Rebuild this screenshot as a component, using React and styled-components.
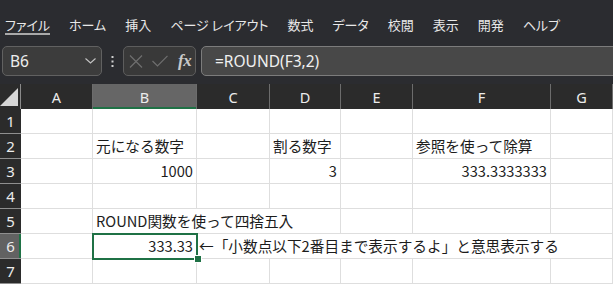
import React from 'react';
import styled, { createGlobalStyle, css } from 'styled-components';

const GlobalStyle = createGlobalStyle`
  html, body {
    margin: 0;
    padding: 0;
    background: #2b2c30;
    overflow: hidden;
  }
`;

const JP = `"Noto Sans CJK JP", "Noto Sans", sans-serif`;
const GREEN = '#1f7145';
const GRID = '#dedede';

const Window = styled.div`
  width: 613px;
  height: 284px;
  display: flex;
  flex-direction: column;
  background: #2b2c30;
  overflow: hidden;
`;

const MenuBar = styled.div`
  height: 47px;
  display: flex;
  align-items: flex-start;
  gap: 19px;
  padding-left: 5px;
  box-sizing: border-box;
`;

const MenuItem = styled.div`
  margin-top: 17px;
  height: 16px;
  line-height: 16px;
  font-family: ${JP};
  font-size: 13px;
  font-feature-settings: "palt";
  color: #e8e8e8;
  white-space: nowrap;
  ${(p) => p.$active && css`
    border-bottom: 2px solid #a9a9a9;
  `}
`;

const FormulaRow = styled.div`
  height: 30px;
  display: flex;
  align-items: stretch;
  padding-left: 2px;
  margin-bottom: 8px;
`;

const NameBox = styled.div`
  width: 100px;
  box-sizing: border-box;
  border: 1px solid #616161;
  border-radius: 5px;
  background: #3c3c3c;
  display: flex;
  align-items: center;
  justify-content: space-between;
  padding: 0 5px 0 7px;
  font-family: "Noto Sans", sans-serif;
  font-size: 15.5px;
  color: #ededed;
`;

const Dots = styled.div`
  width: 21px;
  display: flex;
  align-items: center;
  justify-content: center;
`;

const FxBox = styled.div`
  width: 73px;
  box-sizing: border-box;
  border: 1px solid #5d5d5d;
  border-radius: 5px;
  background: #393939;
  display: flex;
  align-items: center;
  padding-left: 5px;
  gap: 9px;
`;

const FxLabel = styled.span`
  font-family: "Liberation Serif", serif;
  font-style: italic;
  font-weight: bold;
  font-size: 17px;
  color: #c9c9c9;
  margin-left: 1px;
  letter-spacing: -0.5px;
`;

const FormulaInput = styled.div`
  flex: 1;
  margin-left: 5px;
  margin-right: -6px;
  box-sizing: border-box;
  border: 1px solid #7c7c7c;
  border-radius: 5px;
  background: #484848;
  display: flex;
  align-items: center;
  padding-left: 13px;
  font-family: "Noto Sans", sans-serif;
  font-size: 15.5px;
  color: #f0f0f0;
`;

const Sheet = styled.div`
  flex: 1;
  display: grid;
  grid-template-columns: 21px 72px 104px 73px 71px 72px 138px 1fr;
  grid-auto-rows: 25px;
  background: #ffffff;
`;

const Corner = styled.div`
  background: #2b2b2b;
  border-right: 1px solid #8a8a8a;
  box-sizing: border-box;
  display: flex;
  align-items: flex-end;
  justify-content: flex-end;
  padding: 0 2px 3px 0;
`;

const ColHead = styled.div`
  background: ${(p) => (p.$selected ? '#666666' : '#2b2b2b')};
  border-right: 1px solid #6c6c6c;
  box-sizing: border-box;
  display: flex;
  align-items: center;
  justify-content: center;
  font-family: "Noto Sans", sans-serif;
  font-size: 14.5px;
  color: #ececec;
  padding-top: 1px;
  ${(p) => p.$selected && css`
    box-shadow: inset 0 -2px 0 ${GREEN};
  `}
`;

const RowHead = styled.div`
  background: ${(p) => (p.$selected ? '#626262' : '#2b2b2b')};
  border-bottom: 1px solid #8f8f8f;
  box-sizing: border-box;
  display: flex;
  align-items: center;
  justify-content: center;
  font-family: "Noto Sans", sans-serif;
  font-size: 15px;
  color: #ececec;
  ${(p) => p.$selected && css`
    box-shadow: inset -2px 0 0 ${GREEN};
  `}
`;

const Cell = styled.div`
  grid-column: span ${(p) => p.$span || 1};
  position: relative;
  box-sizing: border-box;
  border-right: 1px solid ${GRID};
  border-bottom: 1px solid ${GRID};
  display: flex;
  align-items: center;
  justify-content: ${(p) => (p.$right ? 'flex-end' : 'flex-start')};
  padding: 0 ${(p) => (p.$right ? '3px' : '3px')} 0 ${(p) => (p.$tight ? '2px' : '3px')};
  font-family: ${JP};
  font-size: 14.67px;
  line-height: 1;
  color: #1c1c1c;
  white-space: nowrap;
`;

const Selection = styled.div`
  position: absolute;
  top: -1px;
  left: -1px;
  right: -2px;
  bottom: -2px;
  border: 2px solid ${GREEN};
  z-index: 1;
  pointer-events: none;
`;

const FillHandle = styled.div`
  position: absolute;
  right: -5px;
  bottom: -4px;
  width: 6px;
  height: 6px;
  background: ${GREEN};
  border: 1px solid #ffffff;
  box-sizing: content-box;
  margin: -1px;
  z-index: 2;
`;

const menu = ['ファイル', 'ホーム', '挿入', 'ページ レイアウト', '数式', 'データ', '校閲', '表示', '開発', 'ヘルプ'];
const columns = ['A', 'B', 'C', 'D', 'E', 'F', 'G'];

const Chevron = () => (
  <svg width="11" height="6" viewBox="0 0 11 6">
    <path d="M0.5 0.5 L5.5 5 L10.5 0.5" fill="none" stroke="#c4c4c4" strokeWidth="1.1" />
  </svg>
);

const VDots = () => (
  <svg width="3" height="11" viewBox="0 0 3 11">
    <rect x="0.5" y="0" width="2" height="2" fill="#d0d0d0" />
    <rect x="0.5" y="4.5" width="2" height="2" fill="#d0d0d0" />
    <rect x="0.5" y="9" width="2" height="2" fill="#d0d0d0" />
  </svg>
);

const Cross = () => (
  <svg width="14" height="13" viewBox="0 0 14 13">
    <path d="M1 0.5 L13 12.5 M13 0.5 L1 12.5" stroke="#6f6f6f" strokeWidth="1.2" fill="none" />
  </svg>
);

const Check = () => (
  <svg width="16" height="12" viewBox="0 0 16 12">
    <path d="M0.5 6 L5.5 11 L15.5 0.8" stroke="#6f6f6f" strokeWidth="1.2" fill="none" />
  </svg>
);

const Triangle = () => (
  <svg width="18" height="18" viewBox="0 0 18 18">
    <polygon points="0,18 18,18 18,0" fill="#d6d6d6" />
  </svg>
);

const Row = ({ n, selected, children }) => (
  <>
    <RowHead $selected={selected}>{n}</RowHead>
    {children}
  </>
);

const Empty = ({ count }) => Array.from({ length: count }, (_, i) => <Cell key={i} />);

export default function App() {
  return (
    <Window>
      <GlobalStyle />
      <MenuBar>
        {menu.map((m, i) => (
          <MenuItem key={m} $active={i === 0}>{m}</MenuItem>
        ))}
      </MenuBar>

      <FormulaRow>
        <NameBox>
          B6
          <Chevron />
        </NameBox>
        <Dots><VDots /></Dots>
        <FxBox>
          <Cross />
          <Check />
          <FxLabel>fx</FxLabel>
        </FxBox>
        <FormulaInput>=ROUND(F3,2)</FormulaInput>
      </FormulaRow>

      <Sheet>
        <Corner><Triangle /></Corner>
        {columns.map((c) => (
          <ColHead key={c} $selected={c === 'B'}>{c}</ColHead>
        ))}

        <Row n={1}><Empty count={7} /></Row>

        <Row n={2}>
          <Cell />
          <Cell>元になる数字</Cell>
          <Cell />
          <Cell>割る数字</Cell>
          <Cell />
          <Cell>参照を使って除算</Cell>
          <Cell />
        </Row>

        <Row n={3}>
          <Cell />
          <Cell $right>1000</Cell>
          <Cell />
          <Cell $right>3</Cell>
          <Cell />
          <Cell $right>333.3333333</Cell>
          <Cell />
        </Row>

        <Row n={4}><Empty count={7} /></Row>

        <Row n={5}>
          <Cell />
          <Cell $span={3}>ROUND関数を使って四捨五入</Cell>
          <Empty count={3} />
        </Row>

        <Row n={6} selected>
          <Cell />
          <Cell $right>
            333.33
            <Selection />
            <FillHandle />
          </Cell>
          <Cell $span={5} $tight>←「小数点以下2番目まで表示するよ」と意思表示する</Cell>
        </Row>

        <Row n={7}><Empty count={7} /></Row>
      </Sheet>
    </Window>
  );
}
